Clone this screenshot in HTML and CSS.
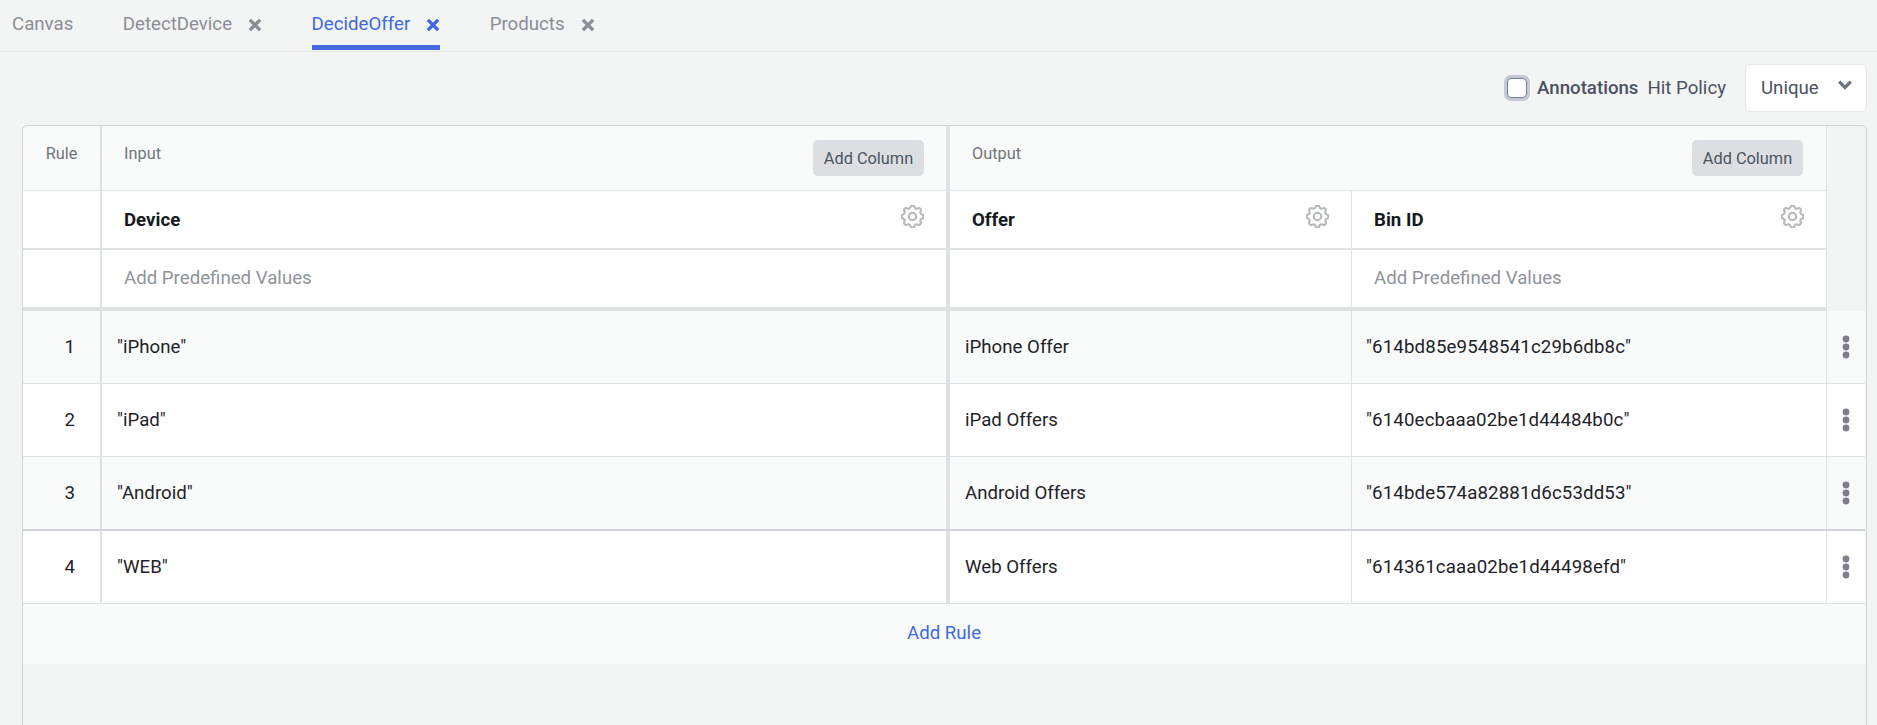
FILE: index.html
```html
<!DOCTYPE html>
<html lang="en">
<head>
    <meta charset="UTF-8">
    <meta name="viewport" content="width=device-width, initial-scale=1.0">
    <title>DecideOffer</title>
    <link rel="stylesheet" href="styles.css">
</head>
<body>

<svg class="sprites" width="0" height="0" aria-hidden="true">
    <symbol id="close" viewBox="0 0 12 12">
        <path d="M1.6 1.6 10.4 10.4M10.4 1.6 1.6 10.4" fill="none" stroke="currentColor" stroke-width="3"/>
    </symbol>
    <symbol id="gear" viewBox="2.6 2.6 18.8 18.8">
        <path d="M10.325 4.317c.426-1.756 2.924-1.756 3.35 0a1.724 1.724 0 002.573 1.066c1.543-.94 3.31.826 2.37 2.37a1.724 1.724 0 001.065 2.572c1.756.426 1.756 2.924 0 3.35a1.724 1.724 0 00-1.066 2.573c.94 1.543-.826 3.31-2.37 2.37a1.724 1.724 0 00-2.572 1.065c-.426 1.756-2.924 1.756-3.35 0a1.724 1.724 0 00-2.573-1.066c-1.543.94-3.31-.826-2.37-2.37a1.724 1.724 0 00-1.065-2.572c-1.756-.426-1.756-2.924 0-3.35a1.724 1.724 0 001.066-2.573c-.94-1.543.826-3.31 2.37-2.37.996.608 2.296.07 2.572-1.065z" fill="none" stroke="currentColor" stroke-width="1.7"/>
        <circle cx="12" cy="12" r="3" fill="none" stroke="currentColor" stroke-width="1.7"/>
    </symbol>
    <symbol id="dots" viewBox="0 0 8 24">
        <circle cx="4" cy="4" r="3.4" fill="currentColor"/>
        <circle cx="4" cy="12" r="3.4" fill="currentColor"/>
        <circle cx="4" cy="20" r="3.4" fill="currentColor"/>
    </symbol>
</svg>

<nav class="tabs">
    <div class="tab">Canvas</div>
    <div class="tab">DetectDevice <svg class="tab-close"><use href="#close"/></svg></div>
    <div class="tab tab-active">DecideOffer <svg class="tab-close"><use href="#close"/></svg></div>
    <div class="tab">Products <svg class="tab-close"><use href="#close"/></svg></div>
</nav>

<div class="toolbar">
    <span class="check"><span class="check-box"></span></span>
    <span class="annotations">Annotations</span>
    <span class="policy-label">Hit Policy</span>
    <div class="select">
        <span>Unique</span>
        <svg class="chevron" viewBox="0 0 14 10"><path d="M1.2 1.6 7 7.4l5.8-5.8" fill="none" stroke="currentColor" stroke-width="3.2"/></svg>
    </div>
</div>

<div class="card">
    <div class="head-wrap">
        <div class="row head-row">
            <div class="cell rule-col"><span class="head-label">Rule</span></div>
            <div class="cell input-col head-cell">
                <span class="head-label">Input</span>
                <button class="add-col">Add Column</button>
            </div>
            <div class="cell output-col head-cell">
                <span class="head-label">Output</span>
                <button class="add-col">Add Column</button>
            </div>
        </div>

        <div class="row name-row">
            <div class="cell rule-col"></div>
            <div class="cell input-col name-cell">
                <b>Device</b>
                <svg class="gear"><use href="#gear"/></svg>
            </div>
            <div class="cell offer-col name-cell">
                <b>Offer</b>
                <svg class="gear"><use href="#gear"/></svg>
            </div>
            <div class="cell bin-col name-cell">
                <b>Bin ID</b>
                <svg class="gear"><use href="#gear"/></svg>
            </div>
        </div>

        <div class="row predefined-row">
            <div class="cell rule-col"></div>
            <div class="cell input-col name-cell muted">Add Predefined Values</div>
            <div class="cell offer-col"></div>
            <div class="cell bin-col name-cell muted">Add Predefined Values</div>
        </div>
    </div>

    <div class="row rule-row striped">
        <div class="cell rule-col num">1</div>
        <div class="cell input-col">"iPhone"</div>
        <div class="cell offer-col">iPhone Offer</div>
        <div class="cell bin-col hash">"614bd85e9548541c29b6db8c"</div>
        <div class="cell action-col"><svg class="dots"><use href="#dots"/></svg></div>
    </div>
    <div class="row rule-row">
        <div class="cell rule-col num">2</div>
        <div class="cell input-col">"iPad"</div>
        <div class="cell offer-col">iPad Offers</div>
        <div class="cell bin-col hash">"6140ecbaaa02be1d44484b0c"</div>
        <div class="cell action-col"><svg class="dots"><use href="#dots"/></svg></div>
    </div>
    <div class="row rule-row striped row-thick">
        <div class="cell rule-col num">3</div>
        <div class="cell input-col">"Android"</div>
        <div class="cell offer-col">Android Offers</div>
        <div class="cell bin-col hash">"614bde574a82881d6c53dd53"</div>
        <div class="cell action-col"><svg class="dots"><use href="#dots"/></svg></div>
    </div>
    <div class="row rule-row">
        <div class="cell rule-col num">4</div>
        <div class="cell input-col">"WEB"</div>
        <div class="cell offer-col">Web Offers</div>
        <div class="cell bin-col hash">"614361caaa02be1d44498efd"</div>
        <div class="cell action-col"><svg class="dots"><use href="#dots"/></svg></div>
    </div>

    <div class="add-rule">Add Rule</div>
</div>

</body>
</html>
```

FILE: styles.css
```css
* {
    box-sizing: border-box;
}

html, body {
    height: 100%;
}

body {
    margin: 0;
    overflow: hidden;
    background-color: #f3f4f4;
    color: #1f2329;
    font-family: 'Roboto', sans-serif;
    font-size: 18.67px;
}

.sprites {
    position: absolute;
}

/* tabs */
.tabs {
    display: flex;
    height: 52px;
    padding-left: 12px;
    border-bottom: 1px solid #e1e4e6;
}

.tab {
    display: flex;
    align-items: flex-start;
    height: 50px;
    margin-right: 49.5px;
    padding-top: 13px;
    color: #8b8e94;
    line-height: 22px;
}

.tab-active {
    color: #4169e1;
    border-bottom: 5px solid #4169e1;
}

.tab-close {
    width: 14px;
    height: 14px;
    margin: 5px 0 0 16px;
}

/* toolbar above the table */
.toolbar {
    display: flex;
    align-items: center;
    justify-content: flex-end;
    height: 73px;
    padding: 0 10px 1px 0;
    color: #4b5160;
}

.check {
    display: flex;
    align-items: center;
    justify-content: center;
    width: 26px;
    height: 26px;
    border-radius: 7px;
    background-color: #c5c9d3;
}

.check-box {
    width: 20px;
    height: 20px;
    border: 1px solid #767f9b;
    border-radius: 4px;
    background-color: #fff;
}

.annotations {
    margin-left: 7px;
    font-weight: 500;
}

.policy-label {
    margin-left: 9px;
}

.select {
    display: flex;
    align-items: center;
    justify-content: space-between;
    width: 122px;
    height: 48px;
    margin-left: 19px;
    padding: 0 14px 0 15px;
    border: 1px solid #e5e7eb;
    border-radius: 5px;
    background-color: #fff;
}

.chevron {
    width: 14px;
    height: 10px;
    margin-top: -6px;
    color: #6b7280;
}

/* decision table */
.card {
    width: 1845px;
    height: 620px;
    margin-left: 22px;
    padding-right: 1px;
    border: 1px solid #d1d5d8;
    border-radius: 5px;
}

.row {
    display: grid;
    grid-template-columns: 79px 848px 402px 475px 38px;
}

.cell {
    display: flex;
    align-items: center;
    border-right: 1px solid #dfe2e5;
}

.rule-col {
    border-right: 2px solid #dfe2e5;
}

.input-col {
    padding-left: 15px;
    border-right: 4px solid #dfe2e5;
}

.offer-col {
    padding-left: 15px;
}

.bin-col {
    padding-left: 14px;
}

.hash {
    letter-spacing: 0.14px;
}

.action-col {
    justify-content: center;
    border-right: 0;
}

/* the three header rows stop short of the actions column */
.head-wrap {
    width: 1804px;
}

.head-row {
    height: 65px;
    border-bottom: 1px solid #e1e4e6;
    background-color: #f9fafa;
    border-top-left-radius: 5px;
}

.head-row .rule-col {
    align-items: flex-start;
    justify-content: center;
    padding-top: 18px;
}

.head-cell {
    align-items: flex-start;
    justify-content: space-between;
    padding: 18px 22px 0 22px;
}

.output-col {
    grid-column: 3 / 5;
    padding-right: 23px;
    border-right: 1px solid #dfe2e5;
}

.head-label {
    color: #6f747c;
    font-size: 16.33px;
}

.add-col {
    width: 111px;
    height: 36px;
    margin-top: -4px;
    padding: 0;
    border: none;
    border-radius: 5px;
    background-color: #dcdee1;
    color: #4b5563;
    font-family: inherit;
    font-size: 16.33px;
}

.name-row {
    height: 59px;
    border-bottom: 2px solid #dfe2e5;
    background-color: #fff;
}

.name-cell {
    justify-content: space-between;
    padding: 1px 22px 0 22px;
}

.name-cell b {
    font-weight: 700;
    color: #16191e;
}

.gear {
    width: 23px;
    height: 23px;
    margin-top: -7px;
    color: #b5b8bc;
}

.predefined-row {
    height: 61px;
    border-bottom: 4px solid #dfe2e5;
    background-color: #fff;
}

.predefined-row .name-cell {
    padding-top: 0;
    padding-bottom: 1px;
}

.muted {
    color: #8f939b;
}

.rule-row {
    height: 73px;
    border-bottom: 1px solid #dfe2e5;
    background-color: #fff;
}

.striped {
    background-color: #f9fafa;
}

.row-thick {
    height: 74px;
    border-bottom: 2px solid #d1d5db;
}

.num {
    justify-content: flex-end;
    padding-right: 25px;
    color: #1f2329;
}

.dots {
    width: 8px;
    height: 24px;
    color: #7b7f8a;
}

.add-rule {
    height: 60px;
    padding-top: 18px;
    background-color: #f9fafa;
    color: #4169e1;
    text-align: center;
}
```
